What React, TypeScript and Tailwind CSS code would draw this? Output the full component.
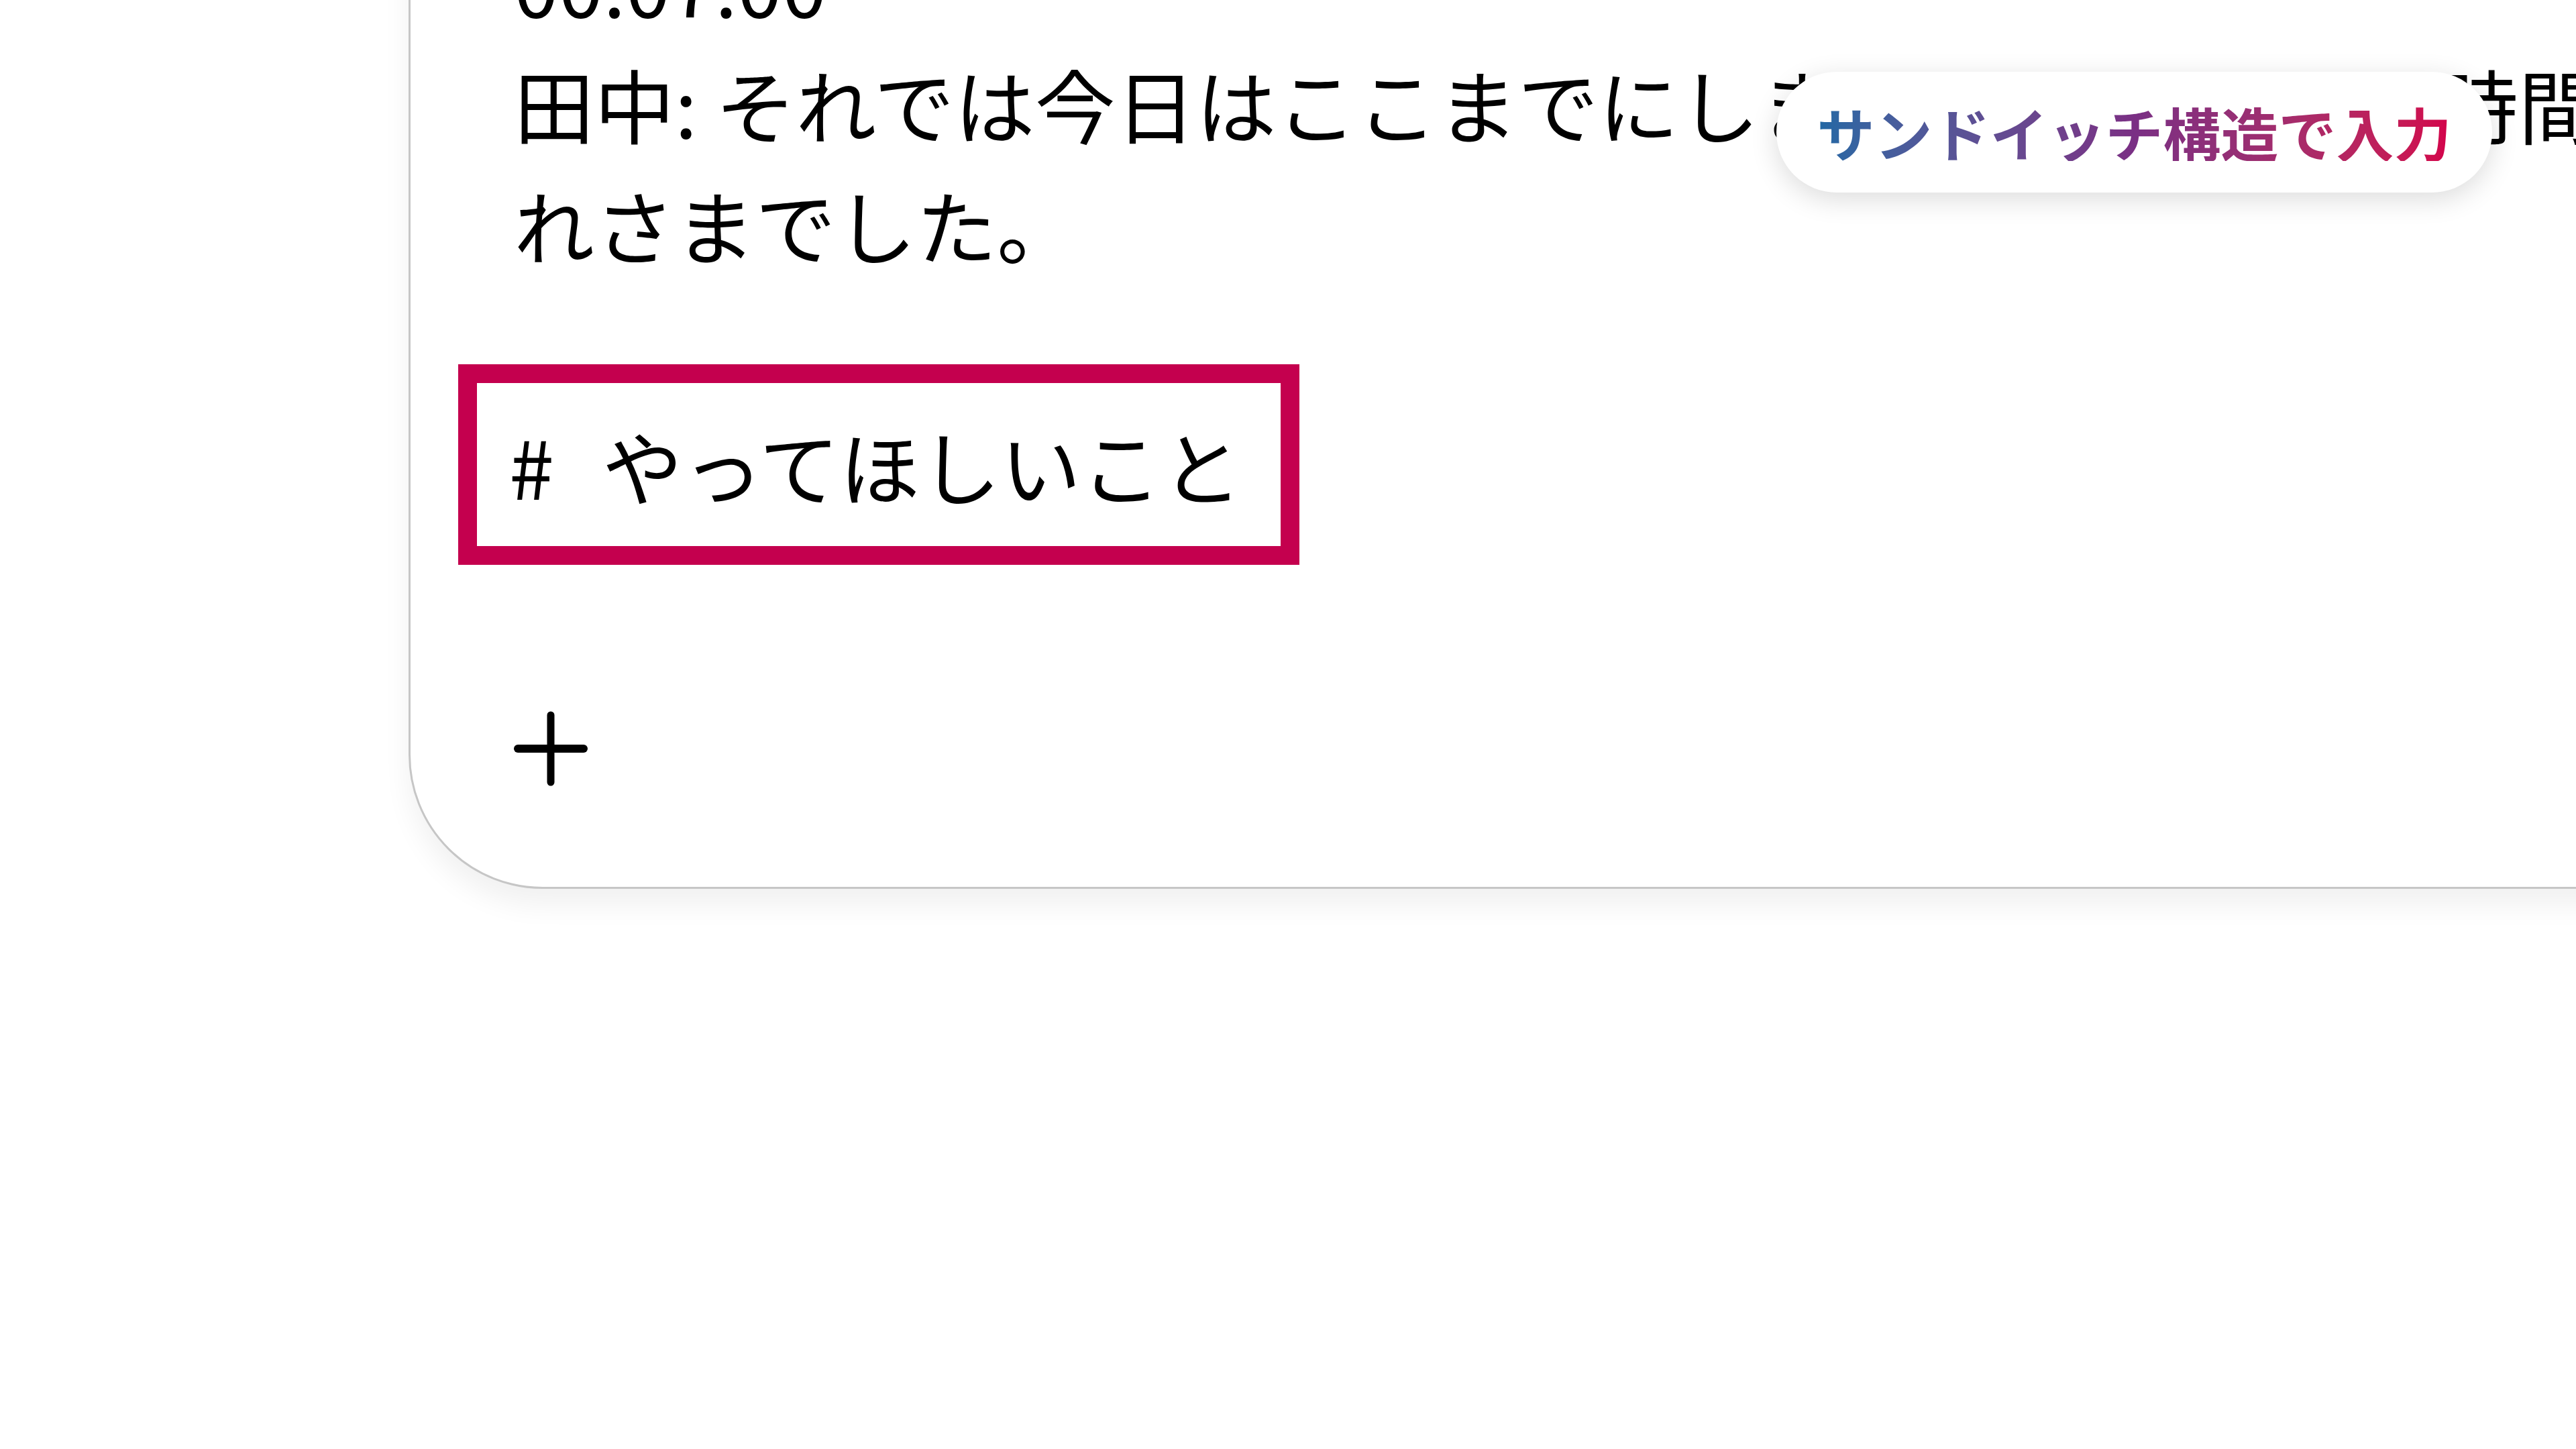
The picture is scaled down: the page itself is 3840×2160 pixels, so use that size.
import { ReactNode } from 'react';

function TextLine({ children }: { children: ReactNode }) {
  return <div className="whitespace-nowrap text-[120px] leading-[180px] text-black">{children}</div>;
}

function PlusIcon() {
  return (
    <svg width="110" height="112" viewBox="0 0 110 112" fill="none" stroke="#000" strokeLinecap="round">
      <line x1="55" y1="6" x2="55" y2="106" strokeWidth="11" />
      <line x1="6" y1="56" x2="104" y2="56" strokeWidth="12" />
    </svg>
  );
}

export default function App() {
  return (
    <div className="relative w-full h-screen overflow-hidden bg-white font-['Noto_Sans_CJK_JP',sans-serif]">
      {/* Editor card (top and right run off the screen) */}
      <div className="ml-[609px] mt-[-300px] w-[3600px] bg-white border-[3px] border-[#c6c6c6] rounded-[200px] shadow-[0_24px_40px_rgba(0,0,0,0.06)] pt-[181px] pl-[154px] pb-[151px]">
        <TextLine>00:07:00</TextLine>
        <TextLine>田中: それでは今日はここまでにしましょうか。{'\u00a0\u00a0'}長い時間お疲</TextLine>
        <TextLine>れさまでした。</TextLine>

        {/* Highlighted heading */}
        <div className="mt-[119px] ml-[-83px] w-fit h-[299px] border-[28px] border-[#c4004e] pl-[48px] pr-[57px] flex items-center">
          <span className="whitespace-nowrap text-[120px] leading-[180px] text-black">
            <span className="mr-[72px]">#</span>やってほしいこと
          </span>
        </div>

        <div className="mt-[218px] h-[111px] flex items-center">
          <PlusIcon />
        </div>
      </div>

      {/* Floating label */}
      <div className="absolute left-[2648px] top-[107px] h-[180px] w-[1067px] rounded-full bg-white shadow-[0_10px_40px_rgba(0,0,0,0.14)] flex items-center justify-center">
        <span className="text-[86px] font-bold leading-none whitespace-nowrap bg-gradient-to-r from-[#2068a4] via-[#7a2f84] to-[#d4004a] bg-clip-text text-transparent">
          サンドイッチ構造で入力
        </span>
      </div>
    </div>
  );
}
